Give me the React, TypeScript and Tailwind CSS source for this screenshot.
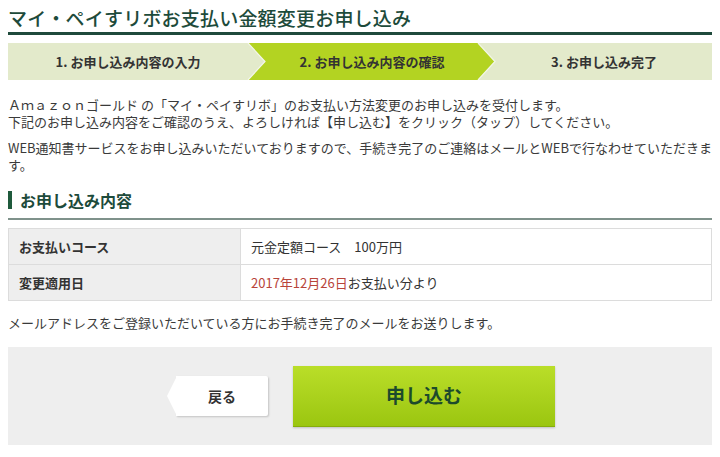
import React from "react";

const font = { fontFamily: '"Noto Sans CJK JP", "Noto Sans", sans-serif' };

function Arrow({ color }: { color: string }) {
  return (
    <svg
      className="absolute top-0 right-[-18px] z-10"
      width="19"
      height="37"
      viewBox="0 0 19 37"
    >
      <polygon points="0,0 1,0 18,18.5 1,37 0,37" fill={color} />
      <polyline points="1,0 18,18.5 1,37" fill="none" stroke="#f3f6ea" strokeWidth="1.2" />
    </svg>
  );
}

export default function App() {
  return (
    <div className="w-[720px] h-[457px] bg-white overflow-hidden" style={font}>
      <div className="px-2">
        <h1 className="pt-[6px] pb-[2px] text-[19px] leading-[24px] font-medium text-[#1d4b3b] border-b-[3px] border-[#1f4a3c] tracking-[0.2px]">
          マイ・ペイすリボお支払い金額変更お申し込み
        </h1>

        <div className="mt-[8px] flex h-[37px] text-[13px] font-bold text-[#333]">
          <div className="relative w-[240px] bg-[#e3eacb] flex items-center justify-center">
            1. お申し込み内容の入力
            <Arrow color="#e3eacb" />
          </div>
          <div className="relative w-[230px] bg-[#b3d322] flex items-center justify-center pl-[18px]">
            2. お申し込み内容の確認
            <Arrow color="#b3d322" />
          </div>
          <div className="flex-1 bg-[#e3eacb] flex items-center justify-center pl-[18px]">
            3. お申し込み完了
          </div>
        </div>

        <div className="mt-[16px] text-[13px] leading-[17px] text-[#3a3a3a]">
          <p>
            Ａｍａｚｏｎゴールド の「マイ・ペイすリボ」のお支払い方法変更のお申し込みを受付します。
            <br />
            下記のお申し込み内容をご確認のうえ、よろしければ【申し込む】をクリック（タップ）してください。
          </p>
          <p className="mt-[9px]">
            WEB通知書サービスをお申し込みいただいておりますので、手続き完了のご連絡はメールとWEBで行なわせていただきます。
          </p>
        </div>

        <div className="mt-[17px] pb-[8px] border-b-2 border-[#7f928b] flex items-center">
          <div className="w-[4px] h-[18px] bg-[#1f5a3c]" />
          <h2 className="ml-[8px] text-[16px] leading-[20px] font-bold text-[#1d4b3b]">お申し込み内容</h2>
        </div>

        <table className="mt-[8px] w-full border-collapse text-[13px] text-[#333]">
          <tbody>
            <tr className="h-[36px]">
              <th className="w-[232px] border border-[#dcdcdc] bg-[#eeeeee] text-left font-bold pl-[10px]">
                お支払いコース
              </th>
              <td className="border border-[#dcdcdc] pl-[10px]">元金定額コース　100万円</td>
            </tr>
            <tr className="h-[36px]">
              <th className="border border-[#dcdcdc] bg-[#eeeeee] text-left font-bold pl-[10px]">変更適用日</th>
              <td className="border border-[#dcdcdc] pl-[10px]">
                <span className="text-[#b8443a]">2017年12月26日</span>お支払い分より
              </td>
            </tr>
          </tbody>
        </table>

        <p className="mt-[13px] text-[13px] leading-[17px] text-[#3a3a3a]">
          メールアドレスをご登録いただいている方にお手続き完了のメールをお送りします。
        </p>

        <div className="mt-[16px] h-[98px] bg-[#eeeeee] flex items-center pl-[158px]">
          <div className="relative w-[92px] h-[40px] ml-[10px] bg-white flex items-center justify-center text-[14px] font-bold text-[#333] shadow-[1px_1px_2px_rgba(0,0,0,0.18)] rounded-r-[2px]">
            <svg className="absolute left-[-10px] top-0" width="11" height="40" viewBox="0 0 11 40">
              <polygon points="11,0 11,40 1,20" fill="#ffffff" />
            </svg>
            戻る
          </div>
          <button className="ml-[25px] w-[262px] h-[61px] bg-gradient-to-b from-[#bade28] to-[#9bc60f] border-b border-[#86ad0a] shadow-[0_1px_2px_rgba(0,0,0,0.2)] text-[19px] font-bold text-[#1c4a2c] flex items-center justify-center">
            申し込む
          </button>
        </div>
      </div>
    </div>
  );
}
